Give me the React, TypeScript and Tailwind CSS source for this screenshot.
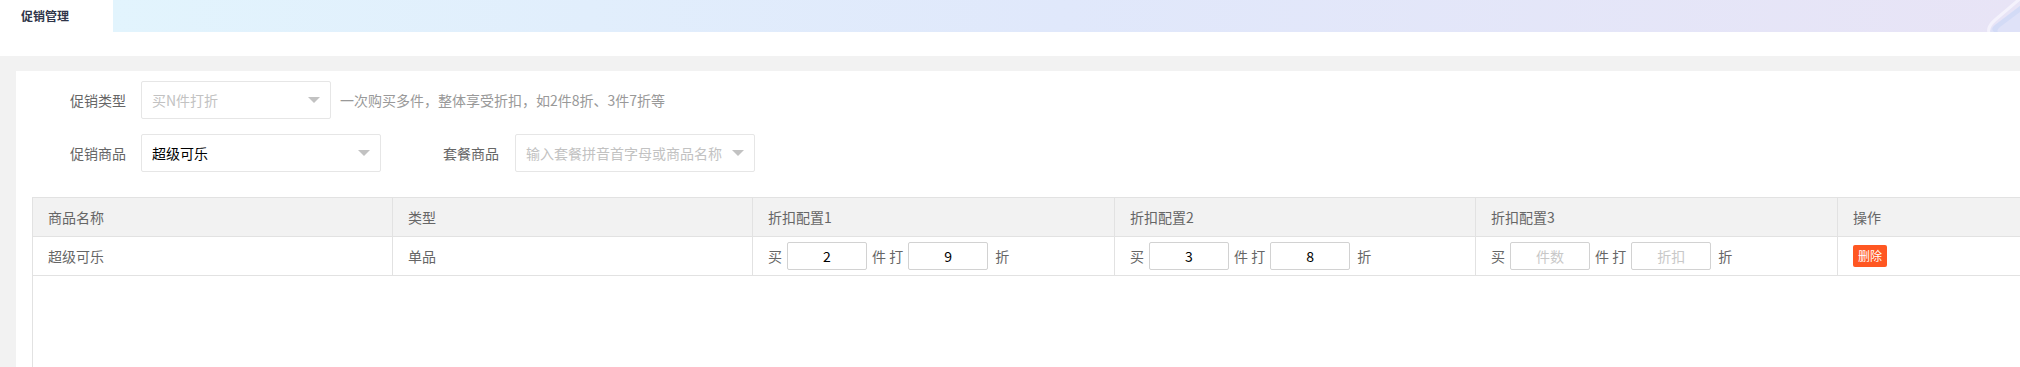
const font = { fontFamily: '"Noto Sans CJK SC", "Liberation Sans", sans-serif' };

function Select({
  width,
  value,
  placeholder,
}: {
  width: string;
  value?: string;
  placeholder?: string;
}) {
  return (
    <div
      className={`relative flex h-[38px] items-center rounded-[2px] border border-[#e6e6e6] bg-white pl-[10px] text-[14px] ${width}`}
    >
      {value ? (
        <span className="text-black">{value}</span>
      ) : (
        <span className="text-[#c2c2c2]">{placeholder}</span>
      )}
      <span className="absolute right-[10px] top-1/2 -mt-[3px] h-0 w-0 border-x-[6px] border-t-[6px] border-x-transparent border-t-[#c2c2c2]" />
    </div>
  );
}

function NumBox({ value, placeholder }: { value?: string; placeholder?: string }) {
  return (
    <div className="flex h-[28px] w-[80px] items-center justify-center rounded-[2px] border border-[#d2d2d2] bg-white text-[14px]">
      {value ? (
        <span className="text-black">{value}</span>
      ) : (
        <span className="text-[#c8c8c8]">{placeholder}</span>
      )}
    </div>
  );
}

function Discount({ n, d }: { n?: string; d?: string }) {
  return (
    <div className="flex items-center text-[14px] text-[#666]">
      <span className="mr-[5px]">买</span>
      <NumBox value={n} placeholder="件数" />
      <span className="mx-[5px]">件 打</span>
      <NumBox value={d} placeholder="折扣" />
      <span className="ml-[7px]">折</span>
    </div>
  );
}

const headers = ["商品名称", "类型", "折扣配置1", "折扣配置2", "折扣配置3", "操作"];
const cols = "grid grid-cols-[359px_360px_362px_361px_362px_361px]";

export default function App() {
  return (
    <div className="flex h-[367px] w-[2020px] flex-col overflow-hidden bg-white" style={font}>
      {/* Tab bar */}
      <div className="flex h-[32px] shrink-0">
        <div className="flex w-[113px] items-center pl-[21px] text-[12px] font-bold text-[#2f3549]">
          促销管理
        </div>
        <div className="relative flex-1 overflow-hidden bg-gradient-to-r from-[#e2f4fd] via-[#e0e8fb] to-[#e8e4f6]">
          <svg
            className="absolute right-0 top-0"
            width="60"
            height="32"
            viewBox="0 0 60 32"
          >
            <path d="M60 6 L36 24 Q29 29 30 34 L60 34 Z" fill="#dfe2f8" />
            <path d="M34 32 Q30 29 35 25 L60 6 L60 12 L40 27 Q36 31 38 32 Z" fill="#d3dbf6" />
            <path
              d="M62 -3 L35 20 Q27 27 29 33"
              fill="none"
              stroke="#f4f2fc"
              strokeWidth="3"
            />
          </svg>
        </div>
      </div>
      <div className="h-[24px] shrink-0" />

      {/* Body */}
      <div className="flex flex-1 flex-col bg-[#f2f2f2] pl-[16px] pt-[15px]">
        <div className="flex flex-1 flex-col bg-white pt-[10px]">
          {/* Form row 1 */}
          <div className="flex h-[38px] items-center">
            <label className="w-[125px] pr-[15px] text-right text-[14px] text-[#666]">促销类型</label>
            <Select width="w-[190px]" placeholder="买N件打折" />
            <span className="ml-[9px] text-[14px] text-[#999]">
              一次购买多件，整体享受折扣，如2件8折、3件7折等
            </span>
          </div>

          {/* Form row 2 */}
          <div className="mt-[15px] flex h-[38px] items-center">
            <label className="w-[125px] pr-[15px] text-right text-[14px] text-[#666]">促销商品</label>
            <Select width="w-[240px]" value="超级可乐" />
            <label className="w-[134px] pr-[16px] text-right text-[14px] text-[#666]">套餐商品</label>
            <Select width="w-[240px]" placeholder="输入套餐拼音首字母或商品名称" />
          </div>

          {/* Table */}
          <div className="ml-[16px] mt-[25px] flex flex-1 flex-col border-l border-[#e2e2e2]">
            <div className={`${cols} border-t border-[#e2e2e2] bg-[#f2f2f2]`}>
              {headers.map((h, i) => (
                <div
                  key={h}
                  className={`flex h-[39px] items-center border-b border-[#e2e2e2] pl-[15px] text-[14px] text-[#666] ${i > 0 ? "border-l" : ""}`}
                >
                  {h}
                </div>
              ))}
            </div>
            <div className={`${cols} text-[14px] text-[#666]`}>
              <div className="flex h-[39px] items-center border-b border-[#e2e2e2] pl-[15px]">超级可乐</div>
              <div className="flex h-[39px] items-center border-b border-l border-[#e2e2e2] pl-[15px]">单品</div>
              <div className="flex h-[39px] items-center border-b border-l border-[#e2e2e2] pl-[15px]">
                <Discount n="2" d="9" />
              </div>
              <div className="flex h-[39px] items-center border-b border-l border-[#e2e2e2] pl-[15px]">
                <Discount n="3" d="8" />
              </div>
              <div className="flex h-[39px] items-center border-b border-l border-[#e2e2e2] pl-[15px]">
                <Discount />
              </div>
              <div className="flex h-[39px] items-center border-b border-l border-[#e2e2e2] pl-[15px]">
                <button className="h-[22px] rounded-[2px] bg-[#ff5722] px-[5px] text-[12px] text-white">
                  删除
                </button>
              </div>
            </div>
            <div className="flex-1" />
          </div>
        </div>
      </div>
    </div>
  );
}
